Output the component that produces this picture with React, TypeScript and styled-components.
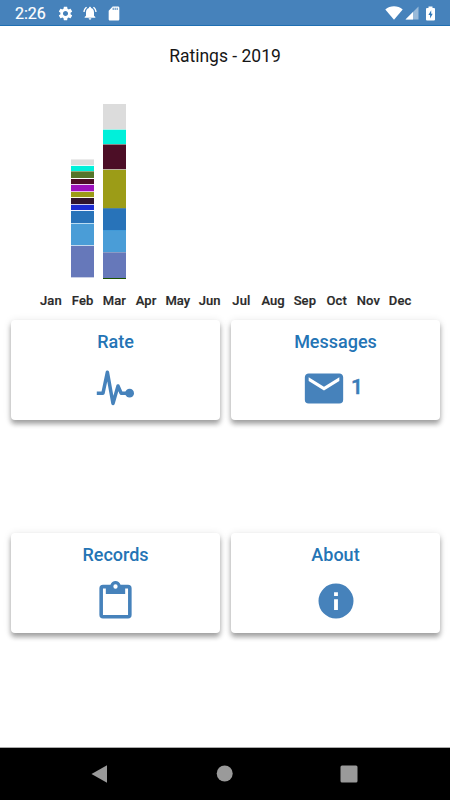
import React from 'react';
import styled, { createGlobalStyle } from 'styled-components';

const GlobalStyle = createGlobalStyle`
  *, *::before, *::after { box-sizing: border-box; }
  body { margin: 0; background: #fff; font-family: Roboto, sans-serif; }
  svg { display: block; }
`;

const Screen = styled.div`
  width: 450px;
  height: 800px;
  display: flex;
  flex-direction: column;
  overflow: hidden;
  background: #fff;
`;

const StatusBar = styled.header`
  height: 26px;
  flex: none;
  display: flex;
  align-items: center;
  padding: 1px 15px 0;
  background: #4682bb;
  border-bottom: 1px solid #1f6fb2;
  color: #fff;
`;

const Clock = styled.time`
  width: 42px;
  font-size: 16px;
  line-height: 25px;
  -webkit-text-stroke: 0.2px #fff;
`;

const StatusGroup = styled.div<{ $gap: number; $end?: boolean }>`
  display: flex;
  align-items: center;
  gap: ${(p) => p.$gap}px;
  margin-left: ${(p) => (p.$end ? 'auto' : '0')};
`;

const Title = styled.h1`
  margin: 20px 0 0;
  height: 22px;
  flex: none;
  font-size: 17.5px;
  font-weight: 400;
  line-height: 21px;
  text-align: center;
  color: #161616;
`;

const Chart = styled.section`
  width: 381px;
  flex: none;
  height: 240px;
  margin-left: 35px;
  padding-top: 36px;
  display: grid;
  grid-template-columns: repeat(12, 1fr);
`;

const Month = styled.div`
  display: flex;
  flex-direction: column;
  align-items: center;
`;

const Bar = styled.div<{ $lift: number }>`
  width: 23px;
  height: 175px;
  padding-bottom: ${(p) => p.$lift}px;
  display: flex;
  flex-direction: column;
  justify-content: flex-end;
`;

const Segment = styled.div<{ $color: string; $edge: string; $size: number }>`
  height: ${(p) => p.$size}px;
  flex: none;
  background: ${(p) => p.$color};
  border-top: 1px solid ${(p) => p.$edge};
`;

const MonthLabel = styled.span`
  margin-top: 13px;
  font-size: 13px;
  font-weight: 500;
  letter-spacing: 0.1px;
  line-height: 18px;
  color: #2a2a2a;
  -webkit-text-stroke: 0.2px #2a2a2a;
`;

const Cards = styled.main`
  flex: 1;
  padding: 12px 10px 0 11px;
  display: grid;
  grid-template-columns: 209px 209px;
  grid-auto-rows: 100px;
  column-gap: 11px;
  row-gap: 113px;
`;

const Card = styled.button`
  display: flex;
  flex-direction: column;
  align-items: center;
  padding: 11px 0 0;
  border: 0;
  border-radius: 4px;
  background: #fff;
  box-shadow: 0 4px 5px rgba(0, 0, 0, 0.33), 0 1px 8px rgba(0, 0, 0, 0.11);
  font-family: inherit;
  color: #2474b5;
`;

const CardTitle = styled.span`
  font-size: 18px;
  font-weight: 500;
  line-height: 22px;
`;

const CardBody = styled.div`
  height: 46px;
  margin-top: 12px;
  display: flex;
  align-items: center;
  color: #4682bb;
`;

const Count = styled.span`
  margin: 0 2px 2px 4px;
  padding-right: 5px;
  font-size: 21px;
  font-weight: 500;
  line-height: 24px;
  color: #3b7cb8;
  -webkit-text-stroke: 0.5px #3b7cb8;
`;

const NavBar = styled.nav`
  height: 53px;
  flex: none;
  display: grid;
  grid-template-columns: 124px 124px 124px;
  justify-content: center;
  align-items: center;
  justify-items: center;
  background: #000;
  border-top: 1px solid #aaa;
`;

const Icon = ({ size, height, d }: { size: number; height?: number; d: string }) => (
  <svg
    width={size}
    height={height ?? size}
    viewBox="0 0 24 24"
    preserveAspectRatio="none"
    fill="currentColor"
  >
    <path fillRule="evenodd" d={d} />
  </svg>
);

const GEAR =
  'M19.14 12.94c.04-.3.06-.61.06-.94 0-.32-.02-.64-.07-.94l2.03-1.58c.18-.14.23-.41.12-.61l-1.92-3.32c-.12-.22-.37-.29-.59-.22l-2.39.96c-.5-.38-1.03-.7-1.62-.94l-.36-2.54c-.04-.24-.24-.41-.48-.41h-3.84c-.24 0-.43.17-.47.41l-.36 2.54c-.59.24-1.13.57-1.62.94l-2.39-.96c-.22-.08-.47 0-.59.22L2.74 8.87c-.12.21-.08.47.12.61l2.03 1.58c-.05.3-.09.63-.09.94s.02.64.07.94l-2.03 1.58c-.18.14-.23.41-.12.61l1.92 3.32c.12.22.37.29.59.22l2.39-.96c.5.38 1.03.7 1.62.94l.36 2.54c.05.24.24.41.48.41h3.84c.24 0 .44-.17.47-.41l.36-2.54c.59-.24 1.13-.56 1.62-.94l2.39.96c.22.08.47 0 .59-.22l1.92-3.32c.12-.22.07-.47-.12-.61l-2.01-1.58zM12 15.6c-1.98 0-3.6-1.62-3.6-3.6s1.62-3.6 3.6-3.6 3.6 1.62 3.6 3.6-1.62 3.6-3.6 3.6z';
const BELL =
  'M7.58 4.08 6.15 2.65C3.75 4.48 2.17 7.3 2.03 10.5h2c.15-2.65 1.51-4.97 3.55-6.42zm12.39 6.42h2c-.15-3.2-1.73-6.02-4.12-7.85l-1.42 1.43c2.02 1.45 3.39 3.77 3.54 6.42zM18 11c0-3.07-1.64-5.64-4.5-6.32V4c0-.83-.67-1.5-1.5-1.5s-1.5.67-1.5 1.5v.68C7.63 5.36 6 7.92 6 11v5l-2 2v1h16v-1l-2-2v-5zm-6 11c.14 0 .27-.01.4-.04.65-.14 1.18-.58 1.44-1.18.1-.24.15-.5.15-.78h-4c.01 1.1.9 2 2.01 2z';
const SD_CARD =
  'M18 2h-8L4.02 8 4 20c0 1.1.9 2 2 2h12c1.1 0 2-.9 2-2V4c0-1.1-.9-2-2-2zm-6.500 5h-1.500V4h1.500v3zm3 0h-1.500V4h1.500v3zm3 0h-1.500V4h1.500v3z';
const MAIL =
  'M20 8l-8 5-8-5V6l8 5 8-5m0-2H4c-1.11 0-2 .89-2 2v12a2 2 0 0 0 2 2h16a2 2 0 0 0 2-2V6c0-1.11-.9-2-2-2z';
const CLIPBOARD =
  'M19 3H14.82C14.4 1.84 13.3 1 12 1C10.7 1 9.6 1.84 9.18 3H5A2 2 0 0 0 3 5V19A2 2 0 0 0 5 21H19A2 2 0 0 0 21 19V5A2 2 0 0 0 19 3M12 2.800A1.200 1.200 0 0 1 13.200 4A1.200 1.200 0 0 1 12 5.200A1.200 1.200 0 0 1 10.800 4A1.200 1.200 0 0 1 12 2.800M6.600 8H17.400V5H19V19.200H5V5H6.600V8Z';
const INFO =
  'M13.100 9.200H10.900V7H13.100M13.100 17.200H10.900V11H13.100M12 2A10 10 0 0 0 2 12A10 10 0 0 0 12 22A10 10 0 0 0 22 12A10 10 0 0 0 12 2Z';

const PulseIcon = () => (
  <svg width="39" height="38" viewBox="0 0 39 38" fill="none">
    <path
      d="M.8 24.2H7L11.400 3.200L17 34.500L22 17L25.200 24.200H33"
      stroke="currentColor"
      strokeWidth="3.5"
      strokeLinejoin="round"
    />
    <circle cx="33.600" cy="24.200" r="4.400" fill="currentColor" />
  </svg>
);

const WifiIcon = () => (
  <svg width="18" height="14" viewBox="0 0 18 14" fill="#fff">
    <path d="M.3 3.4C5.2-.8 12.800-.8 17.700 3.400L9 13.800Z" />
  </svg>
);

const SignalIcon = () => (
  <svg width="14" height="14" viewBox="0 0 14 14" fill="#fff">
    <path d="M13.500.500V13.500H.500Z" opacity=".45" />
    <path d="M8 6V13.500H.500Z" />
  </svg>
);

const BatteryIcon = () => (
  <svg width="9" height="15" viewBox="0 0 9 15">
    <path d="M2.500.500h4v1.500H8q1 0 1 1V13.500q0 1-1 1H1q-1 0-1-1V3q0-1 1-1h1.500Z" fill="#fff" />
    <path d="M5.200 4.200L2.400 9H4.100V12.500L6.700 7.700H5.200Z" fill="#2f77b8" />
  </svg>
);

const BatterySlot = styled.div`
  margin: 0 0 0 5px;
`;

type Part = [color: string, edge: string, size: number];

const FEB: Part[] = [
  ['#dcdcdc', '#ebebeb', 6],
  ['#00f0da', '#e6fffc', 6],
  ['#55752a', '#8fa878', 7],
  ['#4c0e26', '#ffffff', 6],
  ['#9d10bd', '#efd4f4', 7],
  ['#9c9c17', '#e9b6ee', 6],
  ['#30142e', '#fafae0', 7],
  ['#1b2bd2', '#c9c9ef', 6],
  ['#2873b9', '#eef2ff', 13],
  ['#4a9dd7', '#b9dcf2', 22],
  ['#6678ba', '#c4d9ee', 32],
  ['#c9cfe6', '#c9cfe6', 1],
];

const MAR: Part[] = [
  ['#dcdcdc', '#dcdcdc', 25],
  ['#00f0da', '#a6f1e9', 15],
  ['#4c0e26', '#8d8585', 25],
  ['#9c9c17', '#bdb5a0', 39],
  ['#2873b9', '#4d83a0', 22],
  ['#4a9dd7', '#419ad8', 22],
  ['#6678ba', '#8b9bc6', 26],
  ['#1c5200', '#1c5200', 1],
];

const MONTHS: { name: string; parts?: Part[]; lift?: number }[] = [
  { name: 'Jan' },
  { name: 'Feb', parts: FEB, lift: 1 },
  { name: 'Mar', parts: MAR },
  { name: 'Apr' },
  { name: 'May' },
  { name: 'Jun' },
  { name: 'Jul' },
  { name: 'Aug' },
  { name: 'Sep' },
  { name: 'Oct' },
  { name: 'Nov' },
  { name: 'Dec' },
];

export default function App() {
  return (
    <>
      <GlobalStyle />
      <Screen>
        <StatusBar>
          <Clock>2:26</Clock>
          <StatusGroup $gap={8}>
            <Icon size={17} d={GEAR} />
            <Icon size={16} d={BELL} />
            <Icon size={16} height={17} d={SD_CARD} />
          </StatusGroup>
          <StatusGroup $gap={2} $end>
            <WifiIcon />
            <SignalIcon />
            <BatterySlot>
              <BatteryIcon />
            </BatterySlot>
          </StatusGroup>
        </StatusBar>
        <Title>Ratings - 2019</Title>
        <Chart>
          {MONTHS.map((m) => (
            <Month key={m.name}>
              <Bar $lift={m.lift ?? 0}>
                {(m.parts ?? []).map(([color, edge, size], i) => (
                  <Segment key={i} $color={color} $edge={edge} $size={size} />
                ))}
              </Bar>
              <MonthLabel>{m.name}</MonthLabel>
            </Month>
          ))}
        </Chart>
        <Cards>
          <Card>
            <CardTitle>Rate</CardTitle>
            <CardBody>
              <PulseIcon />
            </CardBody>
          </Card>
          <Card>
            <CardTitle>Messages</CardTitle>
            <CardBody>
              <Icon size={46} height={45} d={MAIL} />
              <Count>1</Count>
            </CardBody>
          </Card>
          <Card>
            <CardTitle>Records</CardTitle>
            <CardBody>
              <Icon size={43} height={45} d={CLIPBOARD} />
            </CardBody>
          </Card>
          <Card>
            <CardTitle>About</CardTitle>
            <CardBody>
              <Icon size={42} d={INFO} />
            </CardBody>
          </Card>
        </Cards>
        <NavBar>
          <svg width="22" height="18" viewBox="0 0 22 18" fill="#9a9a9a">
            <path d="M1.500 9L17 .300V17.700Z" />
          </svg>
          <svg width="18" height="18" viewBox="0 0 18 18" fill="#9a9a9a">
            <circle cx="8.700" cy="8.500" r="8" />
          </svg>
          <svg width="18" height="18" viewBox="0 0 18 18" fill="#9a9a9a">
            <rect x=".5" y=".5" width="17" height="17" rx="1.500" />
          </svg>
        </NavBar>
      </Screen>
    </>
  );
}
